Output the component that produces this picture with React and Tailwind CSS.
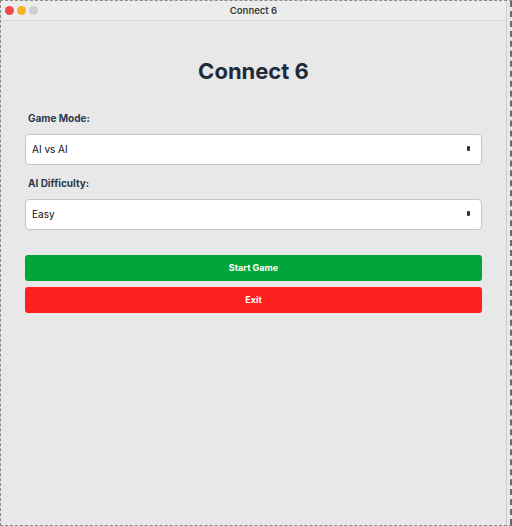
import { useState } from "react";

function Select({ value, options, onChange }) {
  return (
    <div className="relative h-[31px] rounded-[4px] border border-[#c4c4c4] bg-white">
      <select
        value={value}
        onChange={(e) => onChange(e.target.value)}
        className="h-full w-full appearance-none bg-transparent pl-[6px] text-[10px] text-[#111] outline-none"
      >
        {options.map((o) => (
          <option key={o}>{o}</option>
        ))}
      </select>
      {/* tiny dropdown marker */}
      <span className="pointer-events-none absolute right-[11px] top-[11px] h-[5px] w-[3px] rounded-[1px] bg-[#2a3445]" />
    </div>
  );
}

export default function App() {
  const [mode, setMode] = useState("AI vs AI");
  const [difficulty, setDifficulty] = useState("Easy");

  return (
    <div
      className="flex h-[526px] w-[512px] border-l border-t border-b border-dashed border-[#8a8a8a] bg-[#e8e8e8]"
      style={{ fontFamily: "Inter, 'Liberation Sans', sans-serif" }}
    >
      {/* Window */}
      <div className="flex w-[506px] flex-col border-r border-[#d0d0d0]">
        {/* Title bar */}
        <div className="relative flex h-[20px] items-center justify-center border-b border-[#d6d6d6] bg-[#ececec]">
          <div className="absolute left-[4px] top-[5px] flex gap-[3px]">
            <span className="h-[9px] w-[9px] rounded-full bg-[#f04b4b]" />
            <span className="h-[9px] w-[9px] rounded-full bg-[#f6b125]" />
            <span className="h-[9px] w-[9px] rounded-full bg-[#cfcfcf]" />
          </div>
          <span className="pt-[1px] text-[9.5px] font-semibold text-[#3a3a3a]">Connect 6</span>
        </div>

        {/* Content */}
        <div className="flex flex-col px-[24px] pt-[36px]">
          <h1 className="text-center text-[22px] font-bold leading-[28px] text-[#1e2b3c]">
            Connect 6
          </h1>

          <label className="mt-[26px] pl-[3px] text-[10px] font-bold text-[#2c3a4d]">
            Game Mode:
          </label>
          <div className="mt-[8px]">
            <Select
              value={mode}
              options={["AI vs AI", "Human vs AI", "Human vs Human"]}
              onChange={setMode}
            />
          </div>

          <label className="mt-[11px] pl-[3px] text-[10px] font-bold text-[#2c3a4d]">
            AI Difficulty:
          </label>
          <div className="mt-[8px]">
            <Select
              value={difficulty}
              options={["Easy", "Medium", "Hard"]}
              onChange={setDifficulty}
            />
          </div>

          <button className="mt-[25px] h-[26px] rounded-[3px] bg-[#00a63b] text-[9px] font-bold text-white">
            Start Game
          </button>
          <button className="mt-[6px] h-[26px] rounded-[3px] bg-[#ff2020] text-[9px] font-bold text-white">
            Exit
          </button>
        </div>
      </div>

      {/* Right strip */}
      <div className="flex w-[5px] justify-end">
        <div className="h-full border-r-2 border-dashed border-[#6a6a6a]" />
      </div>
    </div>
  );
}
